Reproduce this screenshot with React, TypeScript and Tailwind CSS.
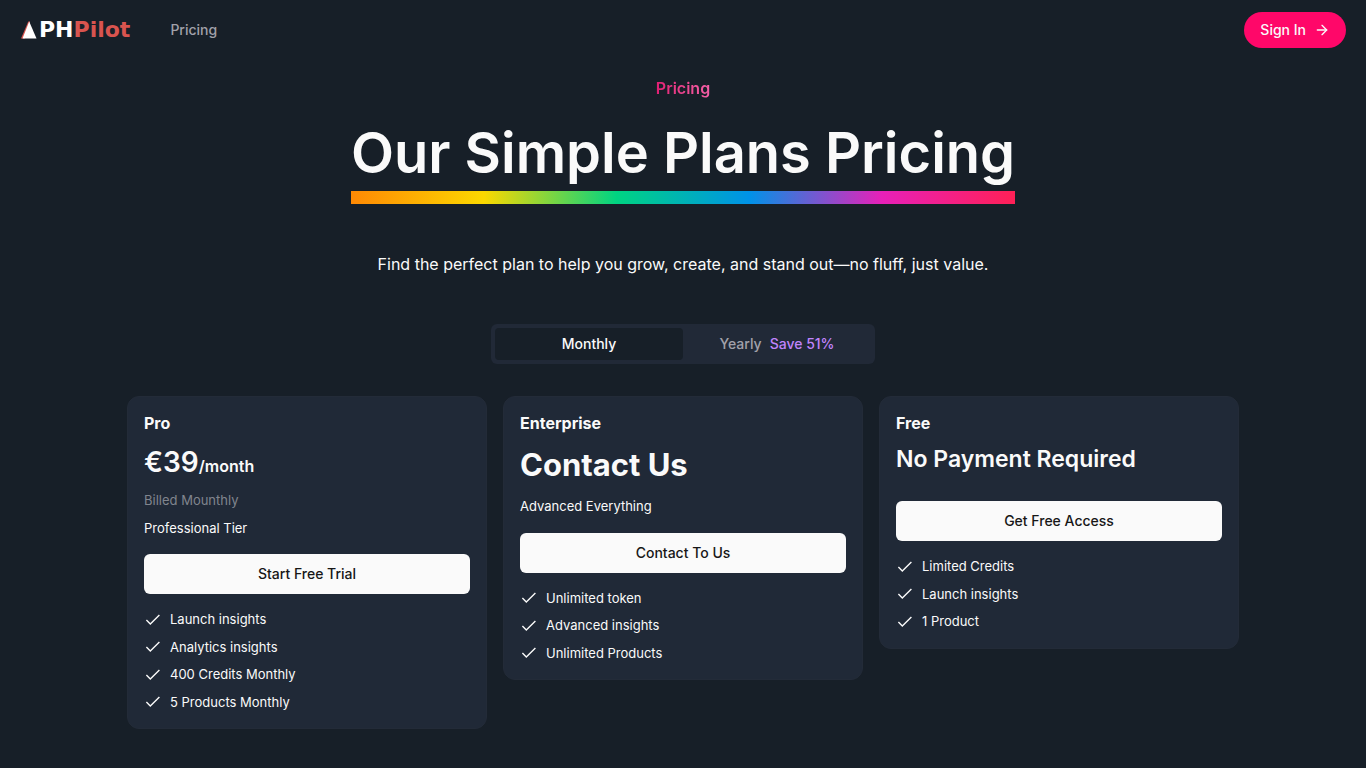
import { useState } from "react";
import { ArrowRight } from "lucide-react";

function Logo() {
  return (
    <a href="/" aria-label="APHPilot" className="flex items-center gap-px font-['DejaVu_Sans',sans-serif] text-[22px] leading-7 font-bold">
      <svg width="18" height="18" viewBox="0 0 18 18" className="shrink-0" aria-hidden="true">
        <path d="M1 17.5 8.3 0.5 10 0.5 5 17.5z" fill="#d9544f" />
        <path d="M2.5 17.5 9.2 0.5 16.5 17.5z" fill="#ffffff" />
      </svg>
      <span className="text-white">
        PH<span className="text-[#d9544f]">Pilot</span>
      </span>
    </a>
  );
}

function CheckIcon() {
  return (
    <svg width="18" height="18" viewBox="0 0 18 18" fill="none" stroke="currentColor" strokeWidth="1.4" className="shrink-0" aria-hidden="true">
      <path d="M2.4 9.1 6.3 13 15.4 4.1" />
    </svg>
  );
}

export default function App() {
  const [period, setPeriod] = useState("monthly");

  const plans = [
    {
      name: "Pro",
      price: <p className="text-[28px] leading-[42px] font-semibold">€39<span className="text-base">/month</span></p>,
      billing: "Billed Mounthly",
      desc: "Professional Tier",
      cta: "Start Free Trial",
      features: ["Launch insights", "Analytics insights", "400 Credits Monthly", "5 Products Monthly"],
    },
    {
      name: "Enterprise",
      price: <p className="text-[31px] leading-12 font-bold">Contact Us</p>,
      billing: "",
      desc: "Advanced Everything",
      cta: "Contact To Us",
      features: ["Unlimited token", "Advanced insights", "Unlimited Products"],
    },
    {
      name: "Free",
      price: <p className="text-[23px] leading-9 font-semibold">No Payment Required</p>,
      billing: "",
      desc: "",
      cta: "Get Free Access",
      features: ["Limited Credits", "Launch insights", "1 Product"],
    },
  ];

  const tabClass = (active: boolean) =>
    "flex flex-1 items-center justify-center gap-2 rounded-sm text-sm font-medium " +
    (active ? "bg-[#171f28] text-neutral-50" : "text-[#a1a1aa]");

  return (
    <div className="min-h-screen bg-[#171f28] font-['Inter',sans-serif] text-neutral-50">
      <header className="flex h-15 items-center justify-between px-5">
        <div className="flex items-center gap-10">
          <Logo />
          <nav className="flex">
            <a href="/pricing" className="text-sm font-medium text-[#a1a1aa]">Pricing</a>
          </nav>
        </div>
        <button type="button" className="flex h-9 items-center gap-2 rounded-full bg-[#ff0769] px-4 text-sm font-medium">
          Sign In
          <ArrowRight size={16} />
        </button>
      </header>

      <main className="flex flex-col items-center px-6 pt-4 pb-8">
        <p className="bg-gradient-to-r from-[#e11d74] to-[#f65fa8] bg-clip-text text-base leading-6 font-semibold text-transparent">Pricing</p>
        <h1 className="mt-4 text-center text-[56px] leading-[75px] font-semibold">
          Our Simple Plans Pricing
          <span className="block h-[13px] bg-[linear-gradient(90deg,#ff8904,#fcd800_20%,#00d382_40%,#0092e8_60%,#e820b8_80%,#ff2056)]" />
        </h1>
        <p className="mt-12 text-center text-base leading-6">
          Find the perfect plan to help you grow, create, and stand out—no fluff, just value.
        </p>

        <div role="tablist" className="mt-12 flex h-10 w-full max-w-96 rounded-md bg-[#212937] p-1">
          <button type="button" role="tab" aria-selected={period === "monthly"} onClick={() => setPeriod("monthly")} className={tabClass(period === "monthly")}>
            Monthly
          </button>
          <button type="button" role="tab" aria-selected={period === "yearly"} onClick={() => setPeriod("yearly")} className={tabClass(period === "yearly")}>
            Yearly <span className="text-[#c084fc]">Save 51%</span>
          </button>
        </div>

        <div className="mt-8 grid w-full max-w-[1112px] grid-cols-1 items-start gap-4 md:grid-cols-3">
          {plans.map(plan => (
            <section key={plan.name} className="rounded-xl border border-[#232b38] bg-[#202937] p-4">
              <div className="space-y-2">
                <h2 className="text-base leading-5 font-bold">{plan.name}</h2>
                {plan.price}
                {plan.billing && <p className="text-[13px] leading-normal text-[#80858e]">{plan.billing}</p>}
                <p className="text-[13px] leading-normal">{plan.desc}</p>
              </div>
              <button type="button" className="mt-4 h-10 w-full rounded-md bg-neutral-50 text-sm font-medium text-neutral-900">
                {plan.cta}
              </button>
              <ul className="mt-4 space-y-2">
                {plan.features.map(feature => (
                  <li key={feature} className="flex items-center gap-2 text-[13px] leading-normal">
                    <CheckIcon />
                    {feature}
                  </li>
                ))}
              </ul>
            </section>
          ))}
        </div>
      </main>
    </div>
  );
}
